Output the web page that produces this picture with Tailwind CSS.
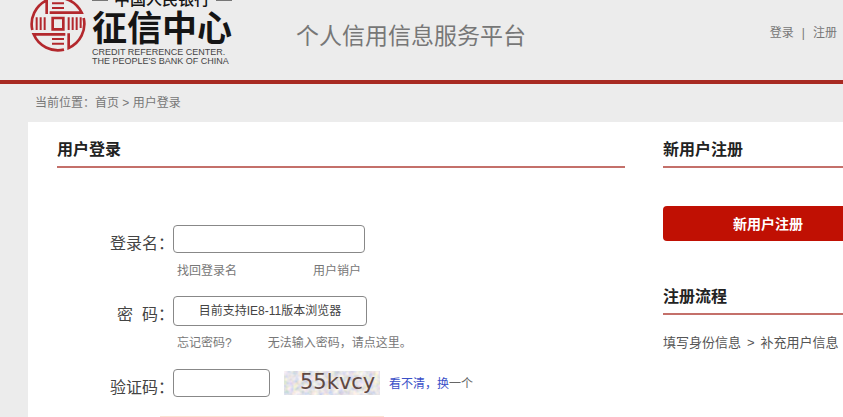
<!DOCTYPE html>
<html lang="zh-CN">
<head>
    <meta charset="UTF-8">
    <meta name="viewport" content="width=device-width, initial-scale=1.0">
    <title>个人信用信息服务平台</title>
    <script src="https://cdn.jsdelivr.net/npm/@tailwindcss/browser@4"></script>
</head>
<body class="h-screen overflow-hidden flex flex-col bg-[#ececec] font-['Liberation_Sans','Noto_Sans_CJK_SC',sans-serif] text-xs text-[#777]">
    <header class="h-[84px] shrink-0 overflow-hidden flex items-start pl-[30px] pr-[6px] border-b-4 border-[#a82a22]">
        <a href="#" class="flex shrink-0 items-start text-[#151515]">
            <svg class="w-14 h-14 -mt-1" viewBox="16 -12 168 168" fill="none" stroke="#b3282d" stroke-width="8">
                <path d="M23 90A79 79 0 0 1 66 1V42M82 -5A79 79 0 0 1 171 38H75M177 54A79 79 0 0 1 132 144V100M118 149A79 79 0 0 1 27 103H122" />
                <path d="M84 54H116V88H84Z" />
                <path d="M36 52V90M48 52V90M60 52V90M132 52V90M144 52V90M156 52V90M168 52V84" stroke-width="6" />
                <path d="M82 10H118M82 24H118M82 117H118M82 131H118" stroke-width="6" />
            </svg>
            <div class="ml-[6px] -mt-[10px]">
                <div class="flex items-center justify-between gap-1 h-5">
                    <span class="w-4 h-px bg-[#777]"></span>
                    <span class="text-base leading-5 font-medium">中国人民银行</span>
                    <span class="w-4 h-px bg-[#777]"></span>
                </div>
                <p class="text-[35px] leading-[38px] font-bold">征信中心</p>
                <p class="text-[9px] leading-[9px] text-[#444]">CREDIT REFERENCE CENTER.</p>
                <p class="text-[9px] leading-[9px] text-[#444]">THE PEOPLE'S BANK OF CHINA</p>
            </div>
        </a>
        <h1 class="ml-16 mt-5 text-[23px] leading-8 text-[#777]">个人信用信息服务平台</h1>
        <nav class="ml-auto mt-6 flex gap-2 leading-[18px] whitespace-nowrap">
            <a href="#">登录</a>
            <span>|</span>
            <a href="#">注册</a>
        </nav>
    </header>

    <nav class="h-[38px] shrink-0 pl-[35px] leading-[38px]">
        当前位置：<a href="#">首页</a> &gt; <a href="#">用户登录</a>
    </nav>

    <main class="flex-1 ml-7 pl-[29px] pt-4 flex gap-[38px] bg-white">
        <section class="flex-1 min-w-0">
            <h2 class="h-[30px] border-b-2 border-[#c4706a] text-base leading-6 font-bold text-[#222]">用户登录</h2>
            <form class="pl-[53px] pt-[57px]">
                <div class="h-[29px] flex items-start">
                    <label for="name" class="w-16 mt-[5px] text-right text-base leading-7 whitespace-nowrap text-[#444]">登录名：</label>
                    <input id="name" type="text" class="w-[192px] h-7 -ml-px border border-[#888] rounded bg-white">
                </div>
                <div class="h-[42px] pl-[67px] pt-2 flex gap-[76px] leading-[18px]">
                    <a href="#">找回登录名</a>
                    <a href="#">用户销户</a>
                </div>
                <div class="h-[30px] flex items-start">
                    <label for="password" class="w-16 mt-[5px] text-right text-base leading-7 whitespace-nowrap text-[#444]">密&nbsp; 码：</label>
                    <input id="password" type="password" placeholder="目前支持IE8-11版本浏览器" class="w-[194px] h-[30px] -ml-px border border-[#888] rounded bg-white text-center text-xs placeholder:text-[#444]">
                </div>
                <div class="h-[43px] pl-[67px] pt-2 flex gap-9 leading-[18px]">
                    <a href="#">忘记密码?</a>
                    <a href="#">无法输入密码，请点这里。</a>
                </div>
                <div class="h-[29px] flex items-start">
                    <label for="captcha" class="w-16 mt-[5px] text-right text-base leading-7 whitespace-nowrap text-[#444]">验证码：</label>
                    <input id="captcha" type="text" class="w-[97px] h-7 -ml-px border border-[#888] rounded bg-white">
                    <svg class="w-24 h-6 ml-[14px] mt-[2px]" viewBox="0 0 96 24">
                        <filter id="grain">
                            <feTurbulence type="fractalNoise" baseFrequency="0.2" numOctaves="2" seed="4" />
                            <feColorMatrix values="0.5 0 0 0 0.54  0.3 0.2 0 0 0.53  0 0 0.4 0 0.61  0 0 0 0 1" color-interpolation-filters="sRGB" />
                        </filter>
                        <rect width="96" height="24" filter="url(#grain)" />
                        <text x="16" y="18" font-family="DejaVu Sans" font-size="21" fill="#5f4843">55kvcy</text>
                    </svg>
                    <a href="#" class="ml-[9px] mt-[6px] leading-[18px] whitespace-nowrap text-[#3a50c8]">看不清，换<span class="text-[#666]">一个</span></a>
                </div>
                <div class="w-56 ml-[50px] mt-[18px] border-t border-[#fbe3d3]"></div>
            </form>
        </section>

        <aside class="w-[180px] shrink-0 overflow-hidden">
            <h2 class="h-[30px] border-b-2 border-[#c4706a] text-base leading-6 font-bold text-[#222]">新用户注册</h2>
            <button type="button" class="w-[210px] h-[35px] mt-[38px] rounded bg-[#c01003] text-sm font-bold text-white">新用户注册</button>
            <h2 class="h-[30px] mt-11 border-b-2 border-[#c4706a] text-base leading-6 font-bold text-[#222]">注册流程</h2>
            <p class="mt-[18px] text-[13px] leading-5 whitespace-nowrap text-[#555]">填写身份信息<span class="mx-[6px]">&gt;</span>补充用户信息</p>
        </aside>
    </main>
</body>
</html>
